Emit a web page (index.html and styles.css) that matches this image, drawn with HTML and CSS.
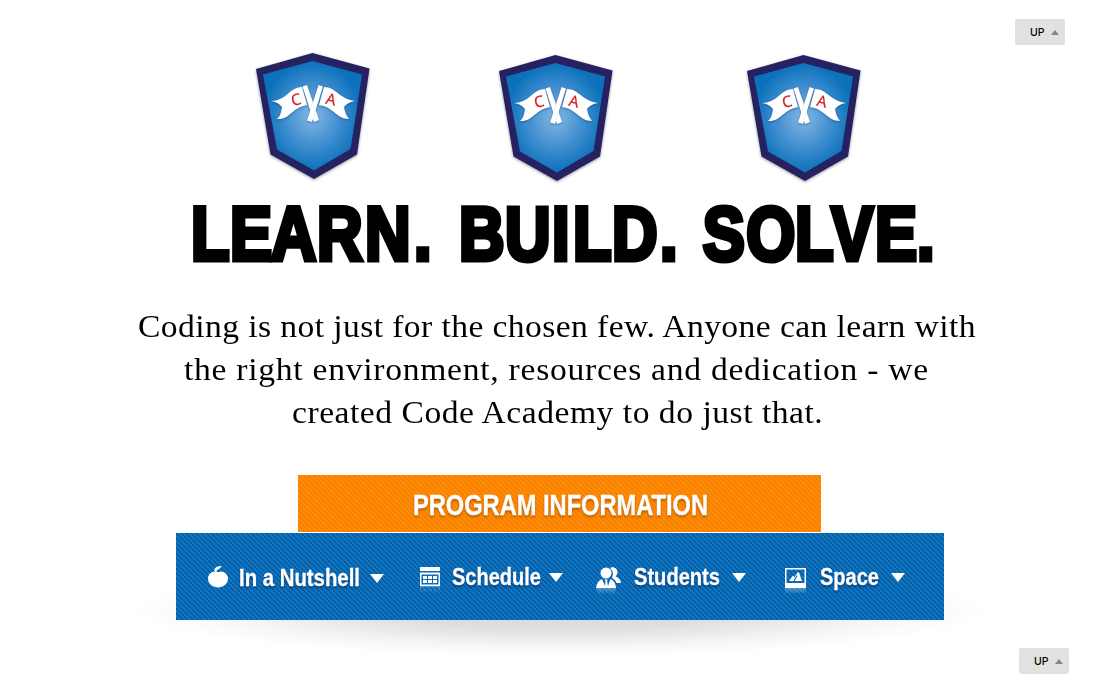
FILE: index.html
```html
<!DOCTYPE html>
<html lang="en">
<head>
<meta charset="utf-8">
<title>Code Academy</title>
<link rel="stylesheet" href="styles.css">
</head>
<body>
<svg class="defs" width="0" height="0" aria-hidden="true">
  <defs>
    <radialGradient id="shield-fill" cx="0.5" cy="0.5" r="0.5">
      <stop offset="0" stop-color="#84b8e4"/>
      <stop offset="0.5" stop-color="#4792d2"/>
      <stop offset="1" stop-color="#0b71bb"/>
    </radialGradient>
    <symbol id="shield" viewBox="0 0 122 136">
      <path class="shield-edge" d="M60.5 2 L117.500 17.500 L105 103.500 L62 128 L18.500 103.500 L4 18 Z"/>
      <path fill="url(#shield-fill)" d="M60.500 10 L110 23.500 L98.500 98 L62 119.500 L25 98.500 L11 23.500 Z"/>
      <g class="flags">
        <path d="M50 36 C36 37 36 49 19 50 Q26 51 30 56 Q29 65 25 68 C38 69 39 57 55 54 Z"/>
        <path d="M72 36 C84 36 87 48 103 50 Q96 51 92 56 Q93 63 97 68 C84 68 82 56 67 54 Z"/>
        <path d="M50.500 35.500 L55 34 L67 69 L62 71 Z"/>
        <path class="pole" d="M66.500 34 L71 35.500 L60 71 L55 69.500 Z"/>
      </g>
      <text class="flag-letter" transform="translate(40.500 55) rotate(-13)">C</text>
      <text class="flag-letter" transform="translate(73 52.500) rotate(13)">A</text>
    </symbol>
  </defs>
</svg>
<a class="up up-top">UP<span class="up-arrow"></span></a>
<a class="up up-bottom">UP<span class="up-arrow"></span></a>
<main class="page">
  <div class="shields">
    <svg class="shield"><use href="#shield"/></svg>
    <svg class="shield second"><use href="#shield"/></svg>
    <svg class="shield third"><use href="#shield"/></svg>
  </div>
  <h1 class="headline">
    <svg width="760" height="80" viewBox="180 195 760 80">
      <g transform="scale(.83 1)">
        <text y="259.800" x="230 277 326.100 381.800 439.700 498.700">LEARN.</text>
        <text y="259.800" x="552.900 608.300 665 690.300 737.300 795.100">BUILD.</text>
        <text y="259.800" x="846.700 899 957.700 1001.500 1054.100 1104.700">SOLVE.</text>
      </g>
    </svg>
  </h1>
  <p class="intro">
    <span class="line line-1">Coding is not just for the chosen few. Anyone can learn with</span>
    <span class="line line-2">the right environment, resources and dedication - we</span>
    <span class="line line-3">created Code Academy to do just that.</span>
  </p>
  <h2 class="banner">
    <svg width="523" height="57"><text x="115" y="40" textLength="295" lengthAdjust="spacingAndGlyphs">PROGRAM INFORMATION</text></svg>
  </h2>
  <div class="nav-wrap">
    <div class="nav-shadow"></div>
    <nav class="nav">
      <a class="item nutshell">
        <svg class="icon" width="20" height="22" viewBox="0 0 20 22"><path d="M0 12.500 C0 8 4 5 7.500 5.500 Q10 6.500 12.500 5.500 C16 5 20 8 20 12.500 C20 18 15 21.500 10 21.500 C5 21.500 0 18 0 12.500Z M6 4.500 C7 1 10 0 13.500 0 C12.500 2 11 3.500 9 4 L8.500 6Z"/></svg>
        <svg class="label" width="121" height="32"><text x="0" y="23" textLength="121" lengthAdjust="spacingAndGlyphs">In a Nutshell</text></svg>
        <span class="caret"></span>
      </a>
      <a class="item schedule">
        <svg class="icon reflect" width="20" height="19" viewBox="0 0 20 19"><path fill-rule="evenodd" d="M0 0H20V4H0Z M0 5.500H20V19H0Z M1.500 7.500V17.500H18.500V7.500Z"/><path d="M3 9h4v3H3z M8 9h4v3H8z M13 9h4v3h-4z M3 13h4v3H3z M8 13h4v3H8z M13 13h4v3h-4z"/></svg>
        <svg class="label" width="90" height="32"><text x="0" y="23" textLength="89" lengthAdjust="spacingAndGlyphs">Schedule</text></svg>
        <span class="caret"></span>
      </a>
      <a class="item students">
        <svg class="icon reflect" width="25" height="21" viewBox="0 0 25 21"><path d="M14 .800 C17-1 21.500 1 21.500 5 C21.500 7 20.500 8 19.500 9.500 Q24.500 11 25 16 H20.500 Q19.500 12.500 16 11 Q18.500 5 14 .800Z"/><circle cx="10" cy="6" r="5.500"/><path d="M0 21 Q1 14 6 12 L9 19 L9.500 14 L8.500 12.500 H12 L11 14 L12 19 L14.500 12 Q19.500 14 20 21Z"/></svg>
        <svg class="label" width="87" height="32"><text x="0" y="23" textLength="86" lengthAdjust="spacingAndGlyphs">Students</text></svg>
        <span class="caret"></span>
      </a>
      <a class="item space">
        <svg class="icon reflect" width="21" height="20" viewBox="0 0 21 20"><path fill-rule="evenodd" d="M0 0H21V20H0Z M1.500 1.500V15H19.500V1.500Z"/><path d="M4 13 L8 7.500 L9.500 9 L12.500 4.500 L14 4.500 L17 13Z"/><path class="split" d="M8.500 14 L12 7.500"/></svg>
        <svg class="label" width="60" height="32"><text x="0" y="23" textLength="59" lengthAdjust="spacingAndGlyphs">Space</text></svg>
        <span class="caret"></span>
      </a>
    </nav>
  </div>
</main>
</body>
</html>
```
FILE: styles.css
```css
* { box-sizing: border-box; }
body { margin: 0; background: #fff; color: #000; font-family: "Liberation Sans", Arial, sans-serif; height: 698px; overflow: hidden; position: relative; }
.defs { position: absolute; }
.page { width: 1100px; padding-top: 51px; }

/* Crests */
.shields { display: flex; padding-left: 252px; height: 144px; }
.shield { width: 122px; height: 136px; overflow: visible; filter: drop-shadow(0 1.500px 1.500px rgba(0,0,0,.4)); }
.second { margin: 2px 0 0 121px; }
.third { margin: 2px 0 0 126px; }
.shield-edge { fill: #262261; }
.flags { fill: #fff; filter: drop-shadow(0 1px 1px rgba(0,30,80,.35)); }
.pole { filter: drop-shadow(0 0 .7px rgba(0,30,80,.4)); }
.flag-letter { fill: #d2232a; font: 15.500px "Open Sans", sans-serif; stroke: #d2232a; stroke-width: .3px; }

/* Headline */
.headline { margin: 0; padding-left: 180px; height: 80px; }
.headline svg { display: block; overflow: visible; }
.headline text { font: bold 76px "Liberation Sans", Arial, sans-serif; stroke: #000; stroke-width: 5px; }

/* Introduction */
.intro { margin: 30px 0 0; height: 170px; font: 32px/43px "Liberation Serif", serif; }
.line { display: block; width: 800px; white-space: nowrap; transform: scaleX(1.05); transform-origin: 0 0; }
.line-1 { margin-left: 138px; letter-spacing: .39px; }
.line-2 { margin-left: 184px; letter-spacing: .69px; }
.line-3 { margin-left: 292px; letter-spacing: .49px; }

/* Diagonal pinstripe, one dot per row of a 5px tile */
.banner, .nav {
  --px: conic-gradient(from 270deg at 1px 1px, var(--dot) 90deg, transparent 0);
  background-image: var(--px), var(--px), var(--px), var(--px), var(--px);
  background-size: 5px 5px;
  background-position: 0 0, 1px 1px, 2px 2px, 3px 3px, 4px 4px;
}
.banner { --dot: #ee740f; background-color: #ff8b00; }
.nav { --dot: #06478c; background-color: #0c73be; }

/* Program bar */
.banner { margin: 0 0 1px 298px; width: 523px; height: 57px; }
.banner svg { display: block; }
.banner text { font: bold 30px "Liberation Sans Narrow", "Liberation Sans", sans-serif; fill: #fff; stroke: #fff; stroke-width: .4px; filter: drop-shadow(0 2px 1px rgba(90,40,0,.4)); }
.nav-wrap { position: relative; width: 768px; margin-left: 176px; }
.nav-shadow { position: absolute; left: -45px; top: 30px; width: 858px; height: 94px; background: radial-gradient(closest-side, rgba(0,0,0,.15), rgba(0,0,0,.13) 40%, rgba(0,0,0,.035) 78%, transparent); }
.nav { position: relative; display: flex; height: 87px; }
.item { display: flex; align-items: flex-start; padding-top: 29px; }
.icon { fill: #fff; flex: none; margin-top: 4px; }
.split { stroke: #0b74c0; stroke-width: 1.200px; }
.reflect { -webkit-box-reflect: below 0 linear-gradient(transparent 65%, rgba(255,255,255,.28)); }
.label { flex: none; overflow: visible; }
.label text { font: bold 24px "Liberation Sans Narrow", "Liberation Sans", sans-serif; fill: #fff; stroke: #fff; stroke-width: .3px; filter: drop-shadow(0 2px 1px rgba(0,20,60,.45)); }
.caret { flex: none; border: 7.500px solid transparent; border-top: 9px solid #fff; border-bottom: 0; margin-top: 11px; }
.nutshell { margin-left: 32px; }
.nutshell .label { margin: 1px 10px 0 11px; }
.nutshell .caret { margin-top: 12px; }
.schedule { margin-left: 36px; }
.schedule .icon { margin-top: 5px; }
.schedule .label { margin: 0 7px 0 12px; }
.students { margin-left: 33px; }
.students .icon { margin-top: 5px; }
.students .label { margin: 0 11px 0 13px; }
.space { margin-left: 39px; }
.space .icon { margin-top: 6px; }
.space .label { margin: 0 11px 0 14px; }

/* Back to top buttons */
.up { position: absolute; z-index: 2; width: 50px; height: 26px; border-radius: 2px; background: #e1e1e1; display: flex; align-items: center; padding: 1px 0 0 15px; font: 500 10.500px Inter, "Liberation Sans", sans-serif; }
.up-top { left: 1015px; top: 19px; }
.up-bottom { left: 1019px; top: 648px; }
.up-arrow { border: 4px solid transparent; border-bottom: 5px solid #858585; border-top: 0; margin-left: 6px; }
```
